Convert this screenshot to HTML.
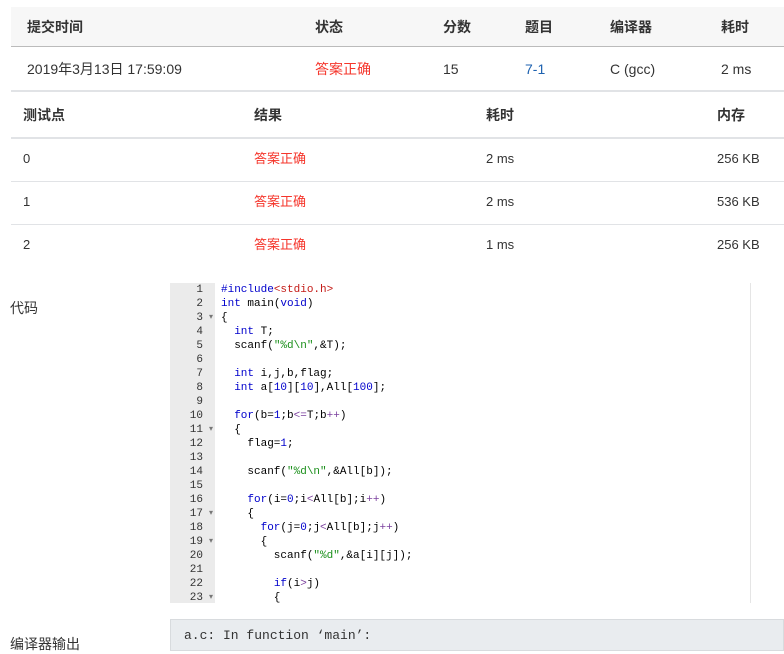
<!DOCTYPE html>
<html><head><meta charset="utf-8"><style>
body{margin:0;width:784px;height:643px;overflow:hidden;background:#fff;font-family:"Liberation Sans","Noto Sans CJK SC",sans-serif;color:#333;position:relative}
.a{position:absolute;white-space:nowrap;line-height:20px;height:20px}
.h1{position:absolute;left:11px;top:7px;width:773px;height:39px;background:#f7f7f7;border-bottom:1px solid #bbb}
.line{position:absolute;left:11px;width:773px;height:1px;background:#e1e3e6}
.r{color:#f5352b}
.code{position:absolute;left:170px;top:283px;width:580px;height:320px;overflow:hidden;border-right:1px solid #e5e5e5;font-family:"Liberation Mono",monospace;font-size:11px;line-height:14px}
.gut{position:absolute;left:0;top:0;width:45px;height:320px;background:#ebebeb;color:#333}
.gut div{text-align:right;padding-right:12px;position:relative}
.gut div.f:after{content:"▾";position:absolute;right:2px;top:0;font-size:8px;color:#777}
pre{margin:0;position:absolute;left:51px;top:0;font:inherit;color:#000}
.k{color:#0000cc}.s{color:#1a8f1a}.n{color:#0000cc}.p{color:#c41a16}.o{color:#7a3e9d}
</style></head><body>
<div class="h1"></div>
<div class="a" style="top:17px;left:27px;font-size:14px;font-weight:bold">提交时间</div>
<div class="a" style="top:17px;left:315px;font-size:14px;font-weight:bold">状态</div>
<div class="a" style="top:17px;left:443px;font-size:14px;font-weight:bold">分数</div>
<div class="a" style="top:17px;left:525px;font-size:14px;font-weight:bold">题目</div>
<div class="a" style="top:17px;left:610px;font-size:14px;font-weight:bold">编译器</div>
<div class="a" style="top:17px;left:721px;font-size:14px;font-weight:bold">耗时</div>
<div class="a" style="top:59px;left:27px;font-size:14px">2019年3月13日 17:59:09</div>
<div class="a r" style="top:59px;left:315px;font-size:14px">答案正确</div>
<div class="a" style="top:59px;left:443px;font-size:14px">15</div>
<div class="a" style="top:59px;left:525px;font-size:14px;color:#1e62b0">7-1</div>
<div class="a" style="top:59px;left:610px;font-size:14px">C (gcc)</div>
<div class="a" style="top:59px;left:721px;font-size:14px">2 ms</div>
<div class="line" style="top:90px;height:2px"></div>
<div class="a" style="top:105px;left:23px;font-size:14px;font-weight:bold">测试点</div>
<div class="a" style="top:105px;left:254px;font-size:14px;font-weight:bold">结果</div>
<div class="a" style="top:105px;left:486px;font-size:14px;font-weight:bold">耗时</div>
<div class="a" style="top:105px;left:717px;font-size:14px;font-weight:bold">内存</div>
<div class="line" style="top:137px;height:2px"></div>
<div class="a" style="top:149px;left:23px;font-size:13px">0</div>
<div class="a r" style="top:149px;left:254px;font-size:13px">答案正确</div>
<div class="a" style="top:149px;left:486px;font-size:13px">2 ms</div>
<div class="a" style="top:149px;left:717px;font-size:13px">256 KB</div>
<div class="line" style="top:181px"></div>
<div class="a" style="top:192px;left:23px;font-size:13px">1</div>
<div class="a r" style="top:192px;left:254px;font-size:13px">答案正确</div>
<div class="a" style="top:192px;left:486px;font-size:13px">2 ms</div>
<div class="a" style="top:192px;left:717px;font-size:13px">536 KB</div>
<div class="line" style="top:224px"></div>
<div class="a" style="top:235px;left:23px;font-size:13px">2</div>
<div class="a r" style="top:235px;left:254px;font-size:13px">答案正确</div>
<div class="a" style="top:235px;left:486px;font-size:13px">1 ms</div>
<div class="a" style="top:235px;left:717px;font-size:13px">256 KB</div>
<div class="a" style="top:298px;left:10px;font-size:14px">代码</div>
<div class="code">
<div class="gut"><div>1</div><div>2</div><div class="f">3</div><div>4</div><div>5</div><div>6</div><div>7</div><div>8</div><div>9</div><div>10</div><div class="f">11</div><div>12</div><div>13</div><div>14</div><div>15</div><div>16</div><div class="f">17</div><div>18</div><div class="f">19</div><div>20</div><div>21</div><div>22</div><div class="f">23</div></div>
<pre><span class="k">#include</span><span class="p">&lt;stdio.h&gt;</span>
<span class="k">int</span> main(<span class="k">void</span>)
{
  <span class="k">int</span> T;
  scanf(<span class="s">"%d\n"</span>,&amp;T);

  <span class="k">int</span> i,j,b,flag;
  <span class="k">int</span> a[<span class="n">10</span>][<span class="n">10</span>],All[<span class="n">100</span>];

  <span class="k">for</span>(b=<span class="n">1</span>;b<span class="o">&lt;=</span>T;b<span class="o">++</span>)
  {
    flag=<span class="n">1</span>;

    scanf(<span class="s">"%d\n"</span>,&amp;All[b]);

    <span class="k">for</span>(i=<span class="n">0</span>;i<span class="o">&lt;</span>All[b];i<span class="o">++</span>)
    {
      <span class="k">for</span>(j=<span class="n">0</span>;j<span class="o">&lt;</span>All[b];j<span class="o">++</span>)
      {
        scanf(<span class="s">"%d"</span>,&amp;a[i][j]);

        <span class="k">if</span>(i<span class="o">&gt;</span>j)
        {</pre>
</div>
<div class="a" style="top:619px;left:170px;width:612px;height:30px;background:#e9ecef;border:1px solid #d8dbde"></div>
<div class="a" style="top:626px;left:184px;font-family:'Liberation Mono',monospace;font-size:13px;color:#333">a.c: In function ‘main’:</div>
<div class="a" style="top:634px;left:10px;font-size:14px">编译器输出</div>
</body></html>
